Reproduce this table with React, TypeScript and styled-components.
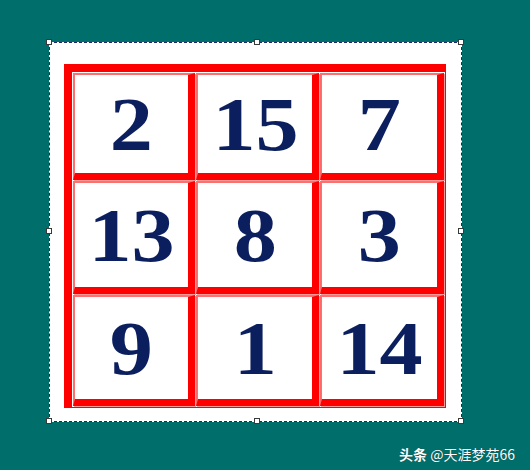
import React from 'react';
import styled, { createGlobalStyle } from 'styled-components';

const Global = createGlobalStyle`
  html, body { margin: 0; padding: 0; }
  body {
    background: #006f6b;
    width: 530px;
    height: 470px;
    overflow: hidden;
    font-family: "Liberation Serif", serif;
  }
`;

const Page = styled.div`
  width: 530px;
  height: 470px;
  display: flex;
  flex-direction: column;
`;

const Canvas = styled.div`
  position: relative;
  align-self: flex-start;
  margin: 42px 0 0 49px;
  width: 413px;
  height: 380px;
  padding: 21px 15px 13px 14px;
  box-sizing: border-box;
  background: #ffffff;
  border: 1px dashed #1c2a6a;
`;

const Handle = styled.span<{ $x: number; $y: number }>`
  position: absolute;
  left: ${(p) => p.$x}px;
  top: ${(p) => p.$y}px;
  width: 4px;
  height: 4px;
  background: #ffffff;
  border: 1px solid #3a3a3a;
`;

const Table = styled.div`
  display: grid;
  grid-template-columns: 122px 123px 124px;
  grid-template-rows: 107px 113px 111px;
  gap: 1px;
  padding: 1px;
  width: 382px;
  height: 344px;
  box-sizing: border-box;
  background: #ffffff;
  border-style: solid;
  border-color: #ff0000;
  border-width: 8px 1px 1px 8px;
`;

const Cell = styled.div`
  background: #ffffff;
  border-style: solid;
  border-color: #ff6f6f #ff0000 #ff0000 #ff6f6f;
  border-width: 2px 7px 7px 2px;
  box-shadow: 1px 1px 0 #ff9a9a;
  display: flex;
  align-items: center;
  justify-content: center;
  color: #0b1f5e;
  font-family: "Liberation Serif", "Times New Roman", serif;
  font-weight: 700;
  font-size: 77px;
  line-height: 1;
`;

const Digits = styled.span`
  display: inline-block;
  transform: scaleX(1.12);
  margin-top: 0;
`;

const Footer = styled.div`
  align-self: flex-end;
  margin: 24px 15px 0 0;
  color: #ffffff;
  font-family: "Noto Sans CJK SC", "Noto Sans", sans-serif;
  font-size: 14px;
  line-height: 17px;
  text-shadow: 0 0 1px rgba(0, 0, 0, 0.45);
  white-space: pre;
`;

const Brand = styled.span`
  font-weight: 700;
`;

const numbers = [2, 15, 7, 13, 8, 3, 9, 1, 14];

const handles: Array<[number, number]> = [
  [-4, -4],
  [204, -4],
  [408, -4],
  [-4, 185],
  [408, 185],
  [-4, 375],
  [204, 375],
  [408, 375],
];

export default function App() {
  return (
    <Page>
      <Global />
      <Canvas>
        <Table>
          {numbers.map((n, i) => (
            <Cell key={i}>
              <Digits>{n}</Digits>
            </Cell>
          ))}
        </Table>
        {handles.map(([x, y], i) => (
          <Handle key={i} $x={x} $y={y} />
        ))}
      </Canvas>
      <Footer>
        <Brand>头条</Brand> @天涯梦苑66
      </Footer>
    </Page>
  );
}
